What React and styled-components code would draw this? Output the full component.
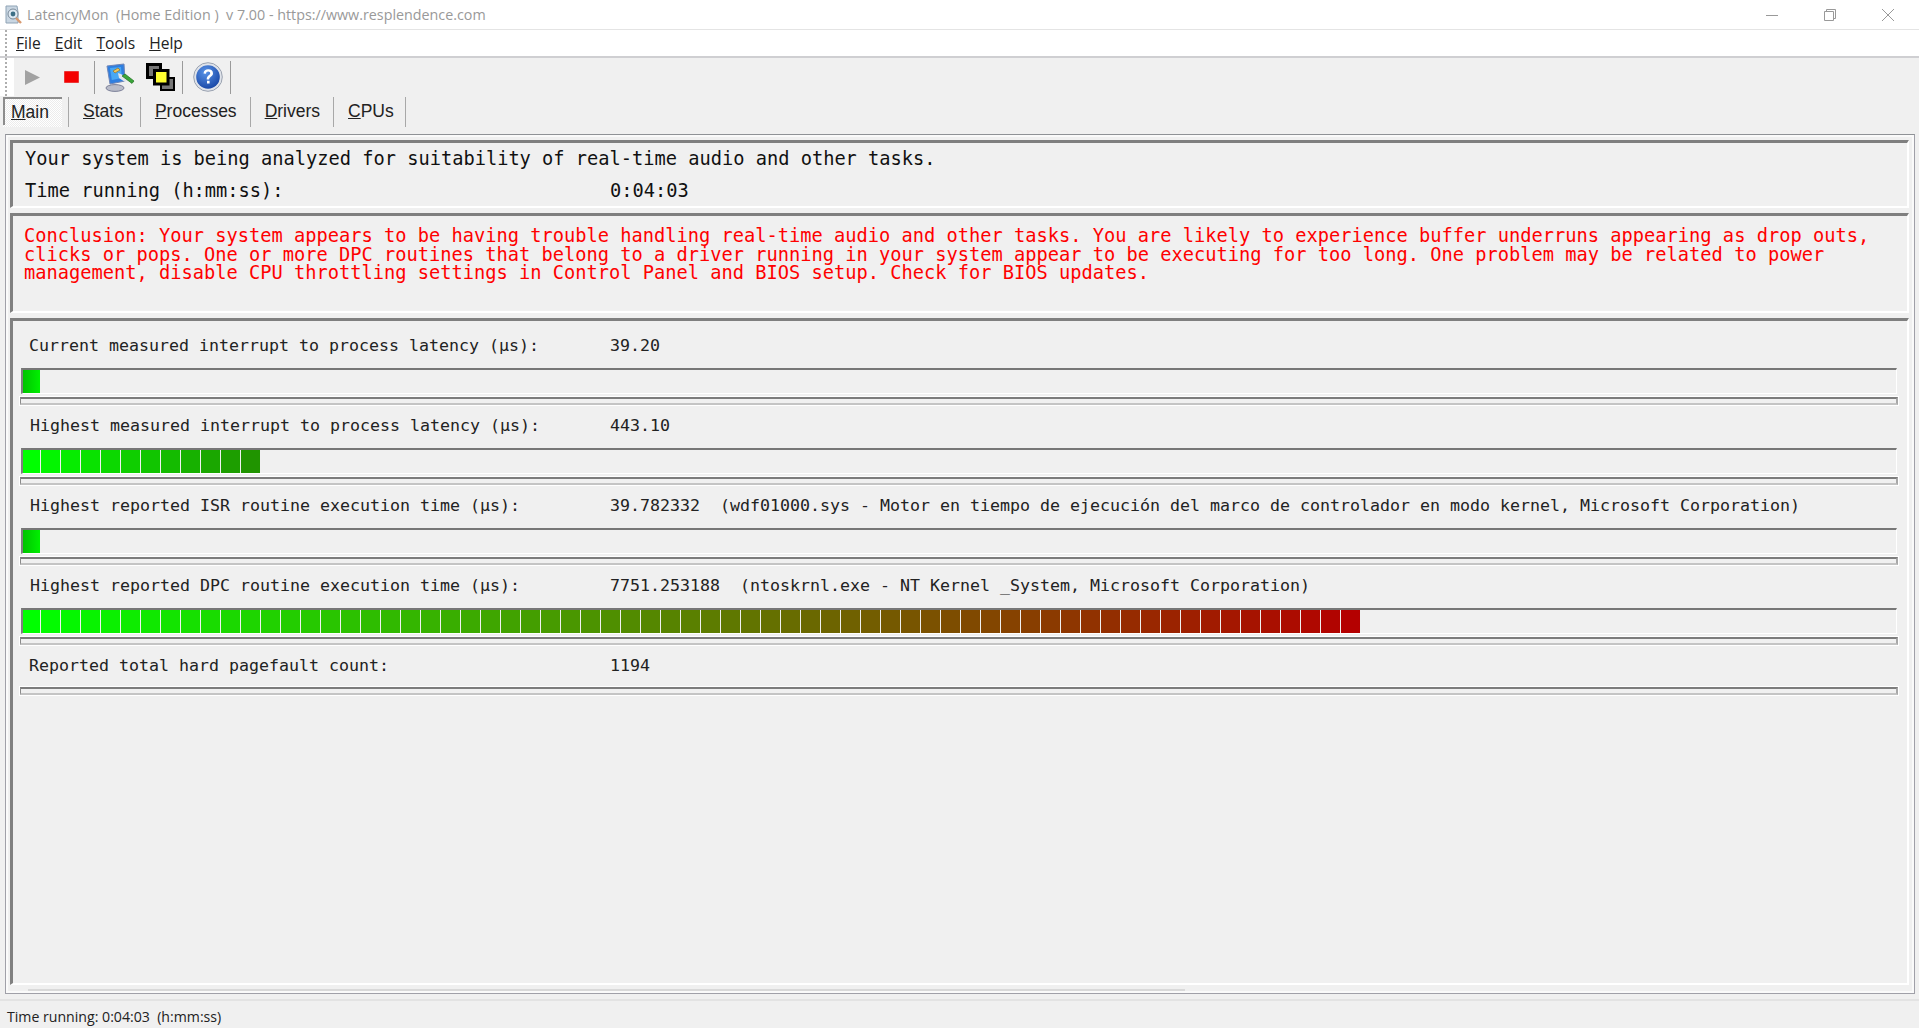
import React from "react";
import styled, { createGlobalStyle } from "styled-components";

const GlobalStyle = createGlobalStyle`
  html, body { margin: 0; padding: 0; background: #f0f0f0; }
  * { box-sizing: border-box; }
`;

const MONO = `"DejaVu Sans Mono", "Liberation Mono", monospace`;

const rows = [
  { label: "Current measured interrupt to process latency (µs):", value: "39.20", count: 1, indent: 9 },
  { label: "Highest measured interrupt to process latency (µs):", value: "443.10", count: 12, end: [32, 148, 0], indent: 10 },
  {
    label: "Highest reported ISR routine execution time (µs):",
    value: "39.782332  (wdf01000.sys - Motor en tiempo de ejecución del marco de controlador en modo kernel, Microsoft Corporation)",
    count: 1,
    indent: 10,
  },
  {
    label: "Highest reported DPC routine execution time (µs):",
    value: "7751.253188  (ntoskrnl.exe - NT Kernel _System, Microsoft Corporation)",
    count: 67,
    end: [180, 0, 0],
    indent: 10,
  },
  { label: "Reported total hard pagefault count:", value: "1194", count: 0, indent: 9 },
];

function segmentColor(i, count, end) {
  const t = count > 1 ? i / (count - 1) : 0;
  const r = Math.round(end[0] * t);
  const g = Math.round(255 + (end[1] - 255) * t);
  const b = Math.round(end[2] * t);
  return `rgb(${r},${g},${b})`;
}

export default function App() {
  return (
    <Page>
      <GlobalStyle />
      <TitleBar>
        <AppIcon />
        <TitleText>LatencyMon&nbsp; (Home Edition )&nbsp; v 7.00 - https://www.resplendence.com</TitleText>
        <WindowButtons>
          <WindowButton>
            <svg width="14" height="14" viewBox="0 0 14 14"><path d="M1 7.5h12" stroke="#999" fill="none" /></svg>
          </WindowButton>
          <WindowButton>
            <svg width="14" height="14" viewBox="0 0 14 14"><path d="M1.5 3.5h9v9h-9zM3.5 3.5v-2h9v9h-2" stroke="#999" fill="none" /></svg>
          </WindowButton>
          <WindowButton>
            <svg width="14" height="14" viewBox="0 0 14 14"><path d="M1 1l12 12M13 1L1 13" stroke="#999" fill="none" /></svg>
          </WindowButton>
        </WindowButtons>
      </TitleBar>

      <MenuBar>
        <Grip />
        {["File", "Edit", "Tools", "Help"].map((m) => (
          <MenuItem key={m}><u>{m[0]}</u>{m.slice(1)}</MenuItem>
        ))}
      </MenuBar>

      <ToolBar>
        <ToolGrip />
        <PlayIcon />
        <StopIcon />
        <ToolSep $gap={15} />
        <MonitorIcon />
        <WindowsIcon />
        <ToolSep $gap={7} />
        <HelpIcon />
        <ToolSep $gap={7} />
      </ToolBar>

      <TabBar>
        <Tab $active><u>M</u>ain</Tab>
        <Tab $right={17}><u>S</u>tats</Tab>
        <Tab $right={13}><u>P</u>rocesses</Tab>
        <Tab $right={13}><u>D</u>rivers</Tab>
        <Tab $right={11}><u>C</u>PUs</Tab>
      </TabBar>

      <Frame>
        <Panel $height={68}>
          <Heading>Your system is being analyzed for suitability of real-time audio and other tasks.</Heading>
          <Heading>
            <HeadingLabel>Time running (h:mm:ss):</HeadingLabel>0:04:03
          </Heading>
        </Panel>
        <Panel $height={100}>
          <Conclusion>
            Conclusion: Your system appears to be having trouble handling real-time audio and other tasks. You are likely to experience buffer underruns appearing as drop outs, clicks or pops. One or more DPC routines that belong to a driver running in your system appear to be executing for too long. One problem may be related to power management, disable CPU throttling settings in Control Panel and BIOS setup. Check for BIOS updates.
          </Conclusion>
        </Panel>
        <MeterPanel>
          {rows.map((row) => (
            <Row key={row.label}>
              <RowText $indent={row.indent}>
                <RowLabel $indent={row.indent}>{row.label}</RowLabel>
                {row.value}
              </RowText>
              {row.count > 0 && (
                <Meter>
                  {Array.from({ length: row.count }, (_, i) =>
                    row.count === 1 ? (
                      <FirstSegment key={i} />
                    ) : (
                      <Segment key={i} style={{ background: segmentColor(i, row.count, row.end) }} />
                    )
                  )}
                </Meter>
              )}
              <ThinBar $tight={row.count === 0} />
            </Row>
          ))}
        </MeterPanel>
        <ScrollThumb />
      </Frame>

      <StatusBar>Time running: 0:04:03&nbsp; (h:mm:ss)</StatusBar>
    </Page>
  );
}

function AppIcon() {
  return (
    <svg width="20" height="20" viewBox="0 0 20 20" style={{ flex: "none" }}>
      <path d="M3 1h11l1 6v11H3z" fill="#c9d6e2" stroke="#8fa3b5" />
      <circle cx="10" cy="9" r="5" fill="#dfe9f2" stroke="#7a8a99" />
      <circle cx="10" cy="9" r="2.4" fill="#3d6f86" />
      <path d="M13 13l5 5" stroke="#d89a70" strokeWidth="2.4" />
    </svg>
  );
}

function PlayIcon() {
  return (
    <IconSlot $left={11} $width={15}>
      <svg width="15" height="15" viewBox="0 0 15 15"><path d="M0 0l15 7.5L0 15z" fill="#a2a2a2" /></svg>
    </IconSlot>
  );
}

function StopIcon() {
  return (
    <IconSlot $left={24} $width={15}>
      <svg width="15" height="12" viewBox="0 0 15 12"><rect width="15" height="12" fill="#f40000" stroke="#d8d8d8" strokeWidth=".5" /></svg>
    </IconSlot>
  );
}

function MonitorIcon() {
  return (
    <IconSlot $left={10} $width={30}>
      <svg width="30" height="29" viewBox="0 0 30 29">
        <ellipse cx="10" cy="25" rx="9" ry="3.4" fill="#b9bcc9" stroke="#7d8199" />
        <path d="M2 3l17-2 1 17-15 3z" fill="#2f7fe0" stroke="#6f86b8" />
        <path d="M5 5l11-1 .8 11-10 2z" fill="#48a8f4" />
        <path d="M8 8l5-3 2 2-5 3z" fill="#eec55a" stroke="#94722a" strokeWidth=".7" />
        <path d="M13 10l5 2 5 5-3 2-6-4z" fill="#e2e6ea" />
        <path d="M17 13l3-2 9 7-2 2.400z" fill="#3aa63a" stroke="#1f6f1f" strokeWidth=".7" />
      </svg>
    </IconSlot>
  );
}

function WindowsIcon() {
  return (
    <IconSlot $left={11} $width={29}>
      <svg width="29" height="28" viewBox="0 0 29 28">
        <rect x="1.500" y="1.500" width="13" height="13" fill="#777" stroke="#000" strokeWidth="3" />
        <rect x="15" y="15" width="13" height="12" fill="#777" stroke="#000" strokeWidth="2" />
        <rect x="8.500" y="7.500" width="13.500" height="13.500" fill="#ffff30" stroke="#000" strokeWidth="3" />
      </svg>
    </IconSlot>
  );
}

function HelpIcon() {
  return (
    <IconSlot $left={10} $width={30}>
      <svg width="30" height="30" viewBox="0 0 30 30">
        <defs>
          <radialGradient id="helpBall" cx=".4" cy=".3" r=".8">
            <stop offset="0" stopColor="#5a94e8" />
            <stop offset="1" stopColor="#123f9f" />
          </radialGradient>
        </defs>
        <circle cx="15" cy="15" r="14.300" fill="#dfe3ea" stroke="#9aa2b0" />
        <circle cx="15" cy="15" r="11.800" fill="url(#helpBall)" />
        <path d="M10.500 11.500c.3-3 2.200-4.300 4.700-4.300 2.900 0 4.800 1.600 4.800 4 0 3.500-3.800 3.400-3.800 6.300h-2.500c0-4.200 3.500-4.200 3.500-6.200 0-1.100-.8-1.800-2-1.800s-2.100.8-2.200 2.200zM14 18.800h2.600v2.800H14z" fill="#fff" />
      </svg>
    </IconSlot>
  );
}

const Page = styled.div`
  width: 1919px;
  height: 1028px;
  background: #f0f0f0;
  display: flex;
  flex-direction: column;
  overflow: hidden;
`;

const TitleBar = styled.header`
  height: 30px;
  flex: none;
  background: #fff;
  border-bottom: 1px solid #e4e4e4;
  display: flex;
  align-items: center;
  padding-left: 3px;
`;

const TitleText = styled.div`
  margin-left: 4px;
  font: 14.3px "Open Sans", "Noto Sans", sans-serif;
  color: #999;
  white-space: pre;
`;

const WindowButtons = styled.div`
  margin-left: auto;
  display: flex;
  margin-right: 24px;
  gap: 44px;
`;

const WindowButton = styled.div`
  width: 14px;
  height: 14px;
  display: flex;
`;

const MenuBar = styled.nav`
  height: 28px;
  flex: none;
  background: #fff;
  border-bottom: 2px solid #cfcfd2;
  display: flex;
  align-items: center;
  font: 15.6px "Open Sans", "Noto Sans", sans-serif;
  color: #222;
`;

const Grip = styled.div`
  width: 16px;
  height: 100%;
  flex: none;
  background-image: repeating-linear-gradient(to bottom, #aeaeae 0 2px, transparent 2px 4px);
  background-size: 2px 100%;
  background-position: 5px 0;
  background-repeat: no-repeat;
`;

const MenuItem = styled.span`
  margin-right: 14px;
`;

const ToolBar = styled.div`
  height: 38px;
  flex: none;
  display: flex;
  align-items: center;
`;

const ToolGrip = styled(Grip)`
  width: 14px;
  background-color: #fff;
`;

const IconSlot = styled.div`
  margin-left: ${(p) => p.$left}px;
  width: ${(p) => p.$width}px;
  flex: none;
  display: flex;
`;

const ToolSep = styled.div`
  width: 1px;
  height: 33px;
  flex: none;
  margin-left: ${(p) => p.$gap}px;
  background: #9a9a9a;
`;

const TabBar = styled.div`
  height: 38px;
  flex: none;
  padding: 1px 0 7px 3px;
  display: flex;
  font: 17.5px "Liberation Sans", sans-serif;
  color: #222;
`;

const Tab = styled.div`
  display: flex;
  align-items: center;
  padding: 0 ${(p) => p.$right ?? 14}px 2px 14px;
  border-right: 1px solid #a8a8a8;
  white-space: pre;
  ${(p) =>
    p.$active &&
    `
    padding: 0 14px 0 8px;
    width: 66px;
    background-image: linear-gradient(#8c8c8c, #8c8c8c), linear-gradient(#8c8c8c, #8c8c8c),
      repeating-conic-gradient(#fff 0 25%, #ececec 0 50%);
    background-size: 59px 2px, 2px 28px, 2px 2px;
    background-position: 0 0, 0 0, 0 0;
    background-repeat: no-repeat, no-repeat, repeat;
    background-clip: border-box;
    box-shadow: inset -6px 0 0 #f0f0f0;
  `}
`;

const Frame = styled.main`
  position: relative;
  height: 860px;
  flex: none;
  margin: 0 4px 0 5px;
  border: 1px solid #a0a0a8;
  border-top-color: #8f9296;
  padding: 5px 5px 8px 4px;
  display: flex;
  flex-direction: column;
  gap: 5px;
  box-shadow: inset 0 0 0 2px #fafafa;
`;

const Panel = styled.section`
  height: ${(p) => p.$height}px;
  flex: none;
  border-style: solid;
  border-width: 3px 2px 2px 3px;
  border-color: #7f7f7f #fff #fff #808080;
`;

const Heading = styled.div`
  height: 32px;
  padding: 0 0 0 12px;
  display: flex;
  align-items: center;
  font: 18.68px ${MONO};
  color: #111;
  white-space: pre;
  &:first-child {
    margin-top: -1px;
  }
`;

const HeadingLabel = styled.span`
  display: inline-block;
  width: 585px;
`;

const Conclusion = styled.p`
  margin: 0;
  padding: 11px 8px 0 11px;
  font: 18.71px/18.7px ${MONO};
  color: #f00;
`;

const MeterPanel = styled(Panel)`
  height: auto;
  flex: 1;
  padding: 12px 9px 0 7px;
`;

const Row = styled.div`
  display: flex;
  flex-direction: column;
  padding-bottom: 8px;
`;

const RowText = styled.div`
  height: 25px;
  display: flex;
  align-items: center;
  padding-left: ${(p) => p.$indent}px;
  font: 16.62px ${MONO};
  color: #222;
  white-space: pre;
`;

const RowLabel = styled.span`
  display: inline-block;
  width: ${(p) => 590 - p.$indent}px;
`;

const Meter = styled.div`
  height: 26px;
  margin: 10px 1px 0 1px;
  border-style: solid;
  border-width: 2px 1px 1px 2px;
  border-color: #777 #fff #fff #808080;
  display: flex;
`;

const Segment = styled.div`
  width: 19px;
  flex: none;
  margin-right: 1px;
  &:first-child {
    width: 17px;
  }
`;

const FirstSegment = styled(Segment)`
  background: linear-gradient(90deg, #00c400, #00f000);
`;

const ThinBar = styled.div`
  height: 8px;
  margin-top: ${(p) => (p.$tight ? 9 : 3)}px;
  border-style: solid;
  border-width: 2px 2px 2px 1px;
  border-color: #7c7c7c #a8a8a8 #c4c4c4 #8a8a8a;
  outline: 1px solid #fff;
  outline-offset: 0;
`;

const ScrollThumb = styled.div`
  position: absolute;
  left: 22px;
  bottom: 2px;
  width: 1157px;
  height: 2px;
  background: #d9d9d9;
`;

const StatusBar = styled.footer`
  flex: 1;
  margin-top: 5px;
  border-top: 2px solid #e3e3e3;
  display: flex;
  align-items: center;
  padding: 3px 0 0 7px;
  font: 14.14px "Open Sans", "Noto Sans", sans-serif;
  color: #222;
  white-space: pre;
`;
